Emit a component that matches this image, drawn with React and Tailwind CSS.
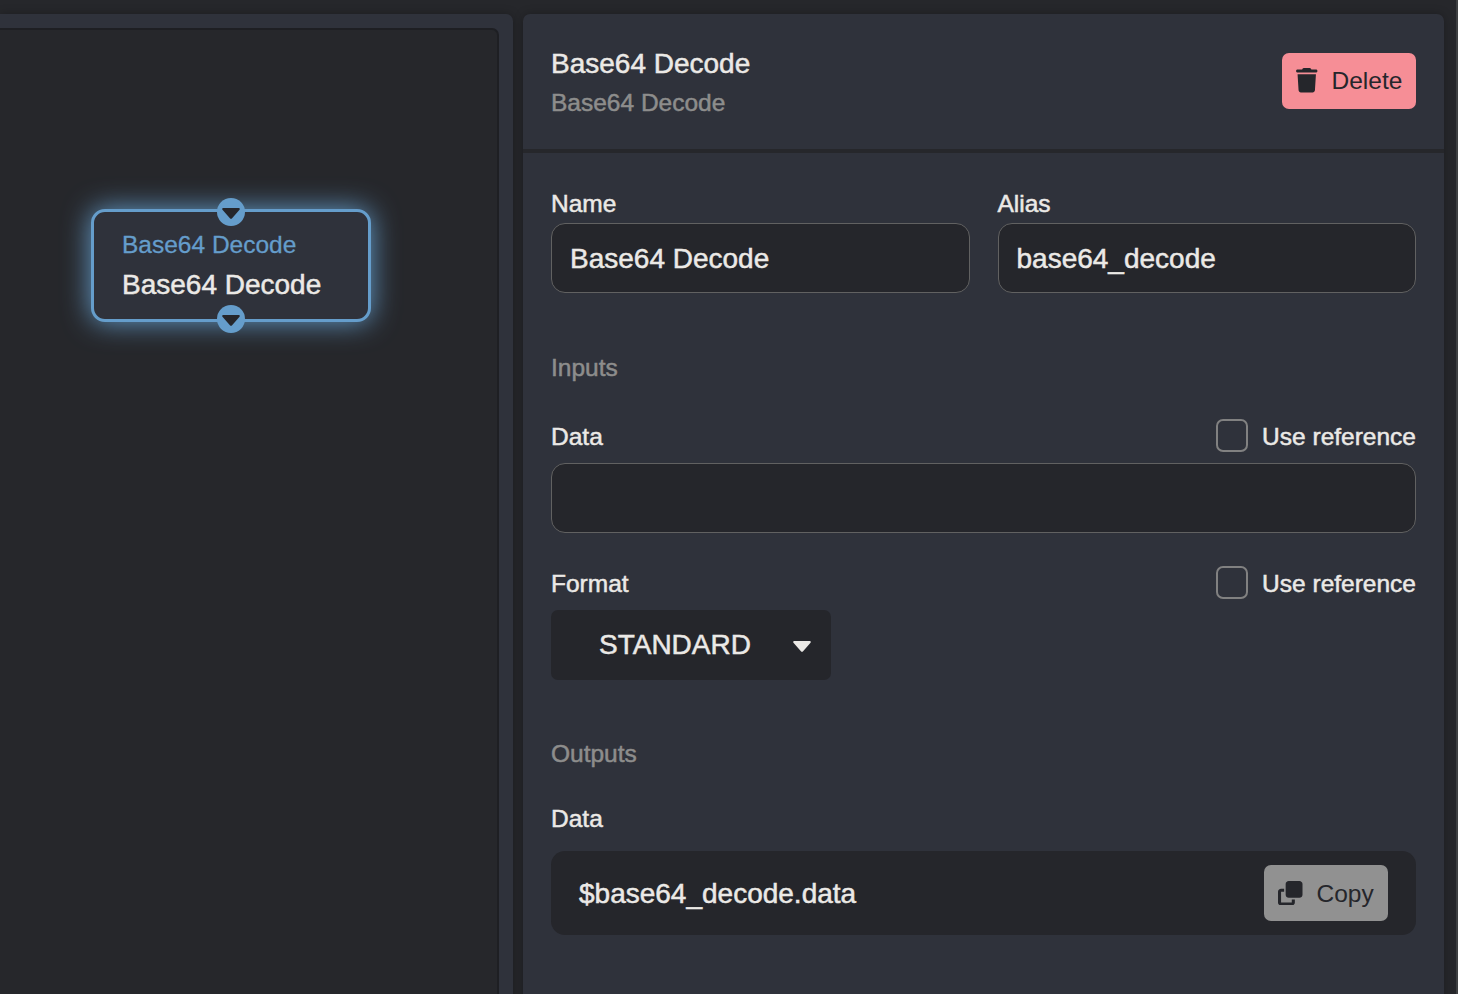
import { FaTrash, FaClone } from "react-icons/fa6";

function Caret({ className = "" }) {
  return (
    <svg viewBox="0 0 18 11" fill="currentColor" className={`h-[11px] w-[18px] shrink-0 ${className}`}>
      <path d="M1.3 0h15.4c1 0 1.4 1.1.8 1.8l-7.6 8.6c-.5.5-1.3.5-1.8 0L.5 1.8C-.1 1.1.3 0 1.3 0z" />
    </svg>
  );
}

function Port({ className }) {
  return (
    <span
      className={`absolute left-1/2 flex h-7 w-7 -translate-x-1/2 items-center justify-center rounded-full bg-[#659dcb] text-[#25262b] ${className}`}
    >
      <Caret />
    </span>
  );
}

function FlowNode() {
  return (
    <div className="absolute top-[179px] left-[91px] h-[113px] w-[280px] rounded-[14px] border-[3px] border-[#659dcb] bg-[#2f323b] px-7 pt-[15px] shadow-[0_0_28px_#659dcb]">
      <Port className="-top-[14px] pt-[3px]" />
      <div className="text-[24.5px] leading-[35px] text-[#659dcb] [-webkit-text-stroke:0.3px_#659dcb]">Base64 Decode</div>
      <div className="mt-[3px] text-[28px] leading-[39px]">Base64 Decode</div>
      <Port className="-bottom-[14px] pt-[2px]" />
    </div>
  );
}

function TextField({ label, value }) {
  return (
    <label className="flex min-w-0 flex-1 flex-col">
      <span className="h-[37px] text-[24.5px] leading-[35px]">{label}</span>
      <span className="flex h-[70px] items-center rounded-[14px] border border-[#616161] bg-[#25262b] px-[18px] pt-[2px] text-[28px]">
        {value}
      </span>
    </label>
  );
}

function ReferenceToggle() {
  return (
    <label className="flex items-center gap-[14px]">
      <span className="h-[33px] w-8 rounded-[7px] border-2 border-[#818181]" />
      <span className="pt-[2px]">Use reference</span>
    </label>
  );
}

function InputHeader({ label }) {
  return (
    <div className="flex h-[35px] items-center justify-between text-[24.5px] leading-[35px]">
      <span className="pt-[2px]">{label}</span>
      <ReferenceToggle />
    </div>
  );
}

export default function App() {
  return (
    <div className="flex h-[994px] w-[1458px] overflow-hidden bg-[#26272b] pt-[14px] font-['Liberation_Sans',Arial,sans-serif] text-[#ebe9e6] [-webkit-text-stroke:0.5px]">
      <section className="h-[1000px] w-[513px] shrink-0 rounded-tr-[7px] bg-[#2f323b] pt-[14px] pr-[14px] shadow-[0_0_10px_rgba(0,0,0,0.25)]">
        <div className="relative h-full rounded-tr-[7px] border-t-2 border-r-2 border-[#1e1f23] bg-[#26272b]">
          <FlowNode />
        </div>
      </section>

      <section className="ml-[10px] h-[1000px] w-[921px] shrink-0 rounded-t-[7px] bg-[#2f323b] shadow-[0_0_10px_rgba(0,0,0,0.25)]">
        <header className="flex h-[139px] items-center justify-between border-b-4 border-[#26272b] px-7 pb-[2px]">
          <div className="pt-[3px]">
            <h1 className="text-[28px] leading-[42px]">Base64 Decode</h1>
            <p className="text-[24.5px] leading-[36px] text-[#8d8d8c]">Base64 Decode</p>
          </div>
          <button className="flex h-14 w-[134px] items-center rounded-[7px] bg-[#f68e96] pl-[14px] text-[24.5px] text-[#25262b] [-webkit-text-stroke:0px]">
            <FaTrash className="mr-[14px] h-[24.5px] w-[21.5px]" />
            <span className="pt-[2px]">Delete</span>
          </button>
        </header>

        <div className="px-7 pt-[33px]">
          <div className="flex gap-7">
            <TextField label="Name" value="Base64 Decode" />
            <TextField label="Alias" value="base64_decode" />
          </div>

          <h2 className="mt-[57px] text-[24.5px] leading-[35px] text-[#8d8d8c]">Inputs</h2>

          <div className="mt-[33px]">
            <InputHeader label="Data" />
            <div className="mt-[10px] h-[70px] rounded-[14px] border border-[#616161] bg-[#25262b]" />
          </div>

          <div className="mt-8">
            <InputHeader label="Format" />
            <button className="mt-[10px] flex h-[70px] w-[280px] items-center rounded-[7px] bg-[#25262b] pl-12 text-[28px]">
              <span className="w-[194px] text-left">STANDARD</span>
              <Caret className="mt-[3px]" />
            </button>
          </div>

          <h2 className="mt-14 text-[24.5px] leading-[35px] text-[#8d8d8c]">Outputs</h2>
          <h3 className="mt-[30px] text-[24.5px] leading-[35px]">Data</h3>

          <div className="mt-[15px] flex h-[84px] items-center justify-between rounded-[14px] bg-[#25262b] px-7">
            <span className="pt-[2px] text-[28px]">$base64_decode.data</span>
            <button className="flex h-14 w-[124px] items-center rounded-[7px] bg-[#919191] pl-[14px] text-[24.5px] text-[#25262b] [-webkit-text-stroke:0px]">
              <FaClone className="mr-[14px] h-[24.5px] w-[24.5px]" />
              <span className="pt-[2px]">Copy</span>
            </button>
          </div>
        </div>
      </section>
      <div className="-mt-[14px] ml-auto w-[2px] bg-[#3e4042]" />
    </div>
  );
}
